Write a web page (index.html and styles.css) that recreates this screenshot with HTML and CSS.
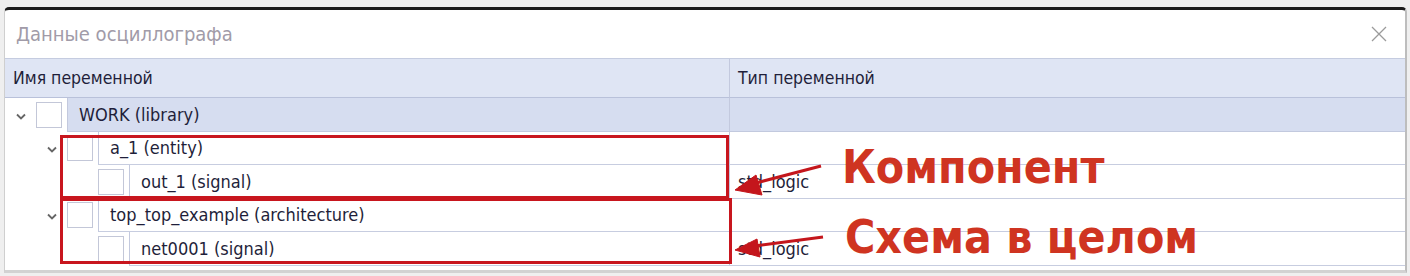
FILE: index.html
```html
<!DOCTYPE html>
<html lang="ru">
<head>
    <meta charset="UTF-8">
    <title>Данные осциллографа</title>
    <link rel="stylesheet" href="styles.css">
</head>
<body>
    <div class="stage">
        <div class="dialog">
            <div class="titlebar">
                <span class="title">Данные осциллографа</span>
                <svg class="close" width="16" height="16" viewBox="0 0 16 16">
                    <path d="M1 1 L15 15 M15 1 L1 15" stroke="#9b9b9b" stroke-width="1.3" fill="none"/>
                </svg>
            </div>
            <div class="grid">
                <div class="head name">Имя переменной</div>
                <div class="head type">Тип переменной</div>

                <div class="cell name lvl0 root">
                    <span class="chev"><svg width="10" height="7" viewBox="0 0 10 7"><path d="M1 1.5 L5 5.5 L9 1.5" stroke="#666" stroke-width="1.8" fill="none"/></svg></span>
                    <span class="box"></span>
                    <span class="label">WORK (library)</span>
                </div>
                <div class="cell type root"></div>

                <div class="cell name lvl1">
                    <span class="chev"><svg width="10" height="7" viewBox="0 0 10 7"><path d="M1 1.5 L5 5.5 L9 1.5" stroke="#666" stroke-width="1.8" fill="none"/></svg></span>
                    <span class="box"></span>
                    <span class="label">a_1 (entity)</span>
                </div>
                <div class="cell type"></div>

                <div class="cell name lvl2">
                    <span class="chev"></span>
                    <span class="box"></span>
                    <span class="label">out_1 (signal)</span>
                </div>
                <div class="cell type">std_logic</div>

                <div class="cell name lvl1">
                    <span class="chev"><svg width="10" height="7" viewBox="0 0 10 7"><path d="M1 1.5 L5 5.5 L9 1.5" stroke="#666" stroke-width="1.8" fill="none"/></svg></span>
                    <span class="box"></span>
                    <span class="label">top_top_example (architecture)</span>
                </div>
                <div class="cell type"></div>

                <div class="cell name lvl2">
                    <span class="chev"></span>
                    <span class="box"></span>
                    <span class="label">net0001 (signal)</span>
                </div>
                <div class="cell type">std_logic</div>
            </div>
        </div>

        <!-- пометки поверх скриншота -->
        <div class="mark mark-1"></div>
        <div class="mark mark-2"></div>
        <svg class="arrows" width="1410" height="276" viewBox="0 0 1410 276">
            <g fill="#c4161c" stroke="#c4161c">
                <line x1="821" y1="166" x2="752" y2="184" stroke-width="3"/>
                <polygon points="735,190 756,175 762,195" stroke-width="1"/>
                <line x1="823" y1="237" x2="754" y2="246" stroke-width="3"/>
                <polygon points="735,250 757,239 760,257" stroke-width="1"/>
            </g>
        </svg>
        <div class="note note-1">Компонент</div>
        <div class="note note-2">Схема в целом</div>
    </div>
</body>
</html>
```

FILE: styles.css
```css
body {
    margin: 0;
    background-color: #efefef;
    font-family: "DejaVu Sans", Verdana, sans-serif;
    color: #1f1f3a;
}
.stage {
    position: relative;
    width: 1410px;
    height: 276px;
    overflow: hidden;
}
.dialog {
    margin: 7px 0 0 4px;
    width: 1400px;
    background-color: #ffffff;
    border-top: 3px solid #1c1c1c;
    border-left: 1px solid #cfcfcf;
    border-right: 2px solid #bdbdbd;
    border-bottom: 3px solid #d2d2d2;
    border-radius: 5px 5px 0 0;
    padding-bottom: 4px;
}
.titlebar {
    height: 48px;
    display: flex;
    align-items: center;
    justify-content: space-between;
    padding: 0 18px 0 11px;
}
.title {
    font-size: 20px;
    color: #a19ba8;
    font-stretch: condensed;
}
.grid {
    display: grid;
    grid-template-columns: 724px 1fr;
    grid-template-rows: 40px repeat(5, 33.5px);
    font-size: 18px;
    font-stretch: condensed;
}
.head {
    background-color: #dfe5f4;
    border-top: 1px solid #c5cce0;
    border-bottom: 1px solid #b9c1da;
    display: flex;
    align-items: center;
    padding-left: 8px;
    font-size: 17.5px;
}
.head.type {
    border-left: 1px solid #c3c9de;
}
.cell {
    display: flex;
    align-items: center;
}
.cell.type {
    border-left: 1px solid #c3c9de;
    border-bottom: 1px solid #c7cde0;
    padding-left: 8px;
}
.cell.root.type {
    background-color: #d6ddf0;
    border-bottom-color: #c2c9de;
}
.lvl1 { padding-left: 31px; }
.lvl2 { padding-left: 62px; }
.chev {
    width: 31px;
    flex: none;
    display: flex;
    justify-content: center;
    padding-top: 3px;
}
.box {
    width: 24px;
    height: 24px;
    flex: none;
    border: 1px solid #c3c7d8;
    background-color: #ffffff;
    margin-right: 5px;
}
.label {
    flex: 1;
    align-self: stretch;
    display: flex;
    align-items: center;
    padding-left: 11px;
    border-left: 1px solid #c3c9de;
    border-bottom: 1px solid #c7cde0;
}
.root .label {
    background-color: #d6ddf0;
    border-bottom-color: #c2c9de;
}
.mark {
    position: absolute;
    border: 3px solid #c8161e;
    box-sizing: border-box;
}
.mark-1 {
    left: 60px;
    top: 135px;
    width: 669px;
    height: 64px;
}
.mark-2 {
    left: 60px;
    top: 198px;
    width: 672px;
    height: 66px;
}
.arrows {
    position: absolute;
    left: 0;
    top: 0;
}
.note {
    position: absolute;
    font-weight: bold;
    font-stretch: condensed;
    color: #cf3421;
    line-height: 1;
    white-space: nowrap;
    font-size: 46px;
}
.note-1 {
    left: 842px;
    top: 144px;
}
.note-2 {
    left: 845px;
    top: 214px;
}
```
